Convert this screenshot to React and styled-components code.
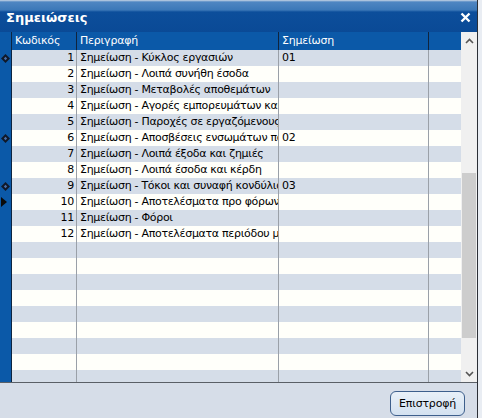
import styled, { createGlobalStyle } from "styled-components";

const GlobalStyle = createGlobalStyle`
  html, body {
    margin: 0;
    padding: 0;
    background: #e9edf3;
  }
  body {
    font-family: Tahoma, "DejaVu Sans", sans-serif;
  }
`;

const NOTES = [
  { code: 1, desc: "Σημείωση - Κύκλος εργασιών", note: "01", mark: "diamond" },
  { code: 2, desc: "Σημείωση - Λοιπά συνήθη έσοδα" },
  { code: 3, desc: "Σημείωση - Μεταβολές αποθεμάτων" },
  { code: 4, desc: "Σημείωση - Αγορές εμπορευμάτων και υλικών" },
  { code: 5, desc: "Σημείωση - Παροχές σε εργαζόμενους" },
  { code: 6, desc: "Σημείωση - Αποσβέσεις ενσωμάτων παγίων", note: "02", mark: "diamond" },
  { code: 7, desc: "Σημείωση - Λοιπά έξοδα και ζημιές" },
  { code: 8, desc: "Σημείωση - Λοιπά έσοδα και κέρδη" },
  { code: 9, desc: "Σημείωση - Τόκοι και συναφή κονδύλια", note: "03", mark: "diamond" },
  { code: 10, desc: "Σημείωση - Αποτελέσματα προ φόρων", mark: "arrow" },
  { code: 11, desc: "Σημείωση - Φόροι" },
  { code: 12, desc: "Σημείωση - Αποτελέσματα περιόδου μετά από φόρους" },
];

const TOTAL_ROWS = 21;

const Marker = ({ type }) => {
  if (type === "diamond") {
    return (
      <svg width="9" height="9" viewBox="0 0 9 9">
        <path d="M4.5 0 L9 4.5 L4.5 9 L0 4.5 Z" fill="#101828" />
        <path d="M4.5 2.8 L6.2 4.5 L4.5 6.2 L2.8 4.5 Z" fill="#4a6ea6" />
      </svg>
    );
  }
  if (type === "arrow") {
    return (
      <svg width="6" height="10" viewBox="0 0 6 10">
        <path d="M0 0 L6 5 L0 10 Z" fill="#0a0a0a" />
      </svg>
    );
  }
  return null;
};

const App = () => {
  const rows = Array.from({ length: TOTAL_ROWS }, (_, i) => NOTES[i] || null);

  return (
    <>
      <GlobalStyle />
      <Window>
        <TitleBar>
          <Title>Σημειώσεις</Title>
          <svg width="11" height="11" viewBox="0 0 11 11">
            <path d="M1.5 1.5 L9.5 9.5 M9.5 1.5 L1.5 9.5" stroke="#ffffff" strokeWidth="2.4" />
          </svg>
        </TitleBar>
        <Grid>
          <Table>
            <HeaderRow>
              <IndicatorCell />
              <HeaderCell $width={65}>Κωδικός</HeaderCell>
              <HeaderCell $width={202}>Περιγραφή</HeaderCell>
              <HeaderCell $width={150}>Σημείωση</HeaderCell>
              <HeaderCell $width={32} $last />
            </HeaderRow>
            <Body>
              {rows.map((row, i) => (
                <Row key={i} $odd={i % 2 === 0}>
                  <IndicatorCell>{row && row.mark && <Marker type={row.mark} />}</IndicatorCell>
                  <Cell $width={65} $align="right">
                    {row ? row.code : ""}
                  </Cell>
                  <Cell $width={202}>{row ? row.desc : ""}</Cell>
                  <Cell $width={150}>{row && row.note ? row.note : ""}</Cell>
                  <Cell $width={32} $last />
                </Row>
              ))}
            </Body>
          </Table>
          <ScrollBar>
            <ScrollArrow>
              <svg width="9" height="6" viewBox="0 0 9 6">
                <path d="M1 5 L4.5 1.5 L8 5" stroke="#555" strokeWidth="1.6" fill="none" />
              </svg>
            </ScrollArrow>
            <Track>
              <Thumb />
            </Track>
            <ScrollArrow>
              <svg width="9" height="6" viewBox="0 0 9 6">
                <path d="M1 1 L4.5 4.5 L8 1" stroke="#555" strokeWidth="1.6" fill="none" />
              </svg>
            </ScrollArrow>
          </ScrollBar>
        </Grid>
        <Footer>
          <ReturnButton>Επιστροφή</ReturnButton>
        </Footer>
      </Window>
    </>
  );
};

const Window = styled.div`
  display: flex;
  flex-direction: column;
  width: 477px;
  height: 418px;
  background: #d6dde8;
  border-right: 1px solid #2b2f36;
`;

const TitleBar = styled.div`
  display: flex;
  align-items: center;
  justify-content: space-between;
  height: 32px;
  box-sizing: border-box;
  padding: 3px 6px 0 6px;
  background: linear-gradient(
    to bottom,
    #c9d6e6 0px,
    #4f86c2 2px,
    #3c78b8 10px,
    #0c4e9b 12px,
    #0a4a96 100%
  );
`;

const Title = styled.span`
  color: #ffffff;
  font-family: Tahoma, "DejaVu Sans", sans-serif;
  font-weight: bold;
  font-size: 13px;
`;

const Grid = styled.div`
  display: flex;
  height: 351px;
  box-sizing: border-box;
  border-bottom: 1px solid #5a5f66;
`;

const Table = styled.div`
  display: flex;
  flex-direction: column;
  width: 461px;
  overflow: hidden;
`;

const HeaderRow = styled.div`
  display: flex;
  height: 18px;
  flex-shrink: 0;
  background: #0b59a8;
`;

const Body = styled.div`
  display: flex;
  flex-direction: column;
  overflow: hidden;
  flex: 1;
`;

const Row = styled.div`
  display: flex;
  height: 16px;
  flex-shrink: 0;
  background: ${({ $odd }) => ($odd ? "#d5dde8" : "#fffffa")};
`;

const IndicatorCell = styled.div`
  width: 12px;
  flex-shrink: 0;
  display: flex;
  align-items: center;
  justify-content: flex-start;
  padding-left: 1px;
  box-sizing: border-box;
  background: #0b59a8;
  border-right: 1px solid #0d2540;
`;

const HeaderCell = styled.div`
  width: ${({ $width }) => $width}px;
  flex-shrink: 0;
  padding-left: 3px;
  box-sizing: border-box;
  border-right: 1px solid ${({ $last }) => ($last ? "transparent" : "#10243d")};
  color: #ffffff;
  font-size: 11px;
  font-family: Tahoma, "DejaVu Sans", sans-serif;
  letter-spacing: -0.2px;
  line-height: 18px;
  white-space: nowrap;
  overflow: hidden;
`;

const Cell = styled.div`
  width: ${({ $width }) => $width}px;
  flex-shrink: 0;
  box-sizing: border-box;
  padding: 0 2px 0 3px;
  border-right: 1px solid ${({ $last }) => ($last ? "transparent" : "#9aa0a8")};
  text-align: ${({ $align }) => $align || "left"};
  color: #000000;
  font-size: 11px;
  font-family: Tahoma, "DejaVu Sans", sans-serif;
  letter-spacing: -0.3px;
  line-height: 16px;
  white-space: nowrap;
  overflow: hidden;
`;

const ScrollBar = styled.div`
  display: flex;
  flex-direction: column;
  width: 16px;
  background: #f0f0f0;
`;

const ScrollArrow = styled.div`
  height: 17px;
  display: flex;
  align-items: center;
  justify-content: center;
`;

const Track = styled.div`
  flex: 1;
  display: flex;
  flex-direction: column;
  padding-top: 124px;
  padding-bottom: 27px;
  box-sizing: border-box;
`;

const Thumb = styled.div`
  flex: 1;
  margin: 0 1px;
  background: #cdcdcd;
`;

const Footer = styled.div`
  flex: 1;
  display: flex;
  justify-content: flex-end;
  align-items: flex-start;
  padding: 8px 12px 0 0;
`;

const ReturnButton = styled.button`
  width: 75px;
  height: 25px;
  border: 1px solid #3d5f8c;
  border-radius: 6px;
  background: linear-gradient(to bottom, #e8f0f8, #d3e1f0);
  color: #000000;
  font-size: 11px;
  font-family: Tahoma, "DejaVu Sans", sans-serif;
  letter-spacing: -0.2px;
  padding: 0;
`;

export default App;
